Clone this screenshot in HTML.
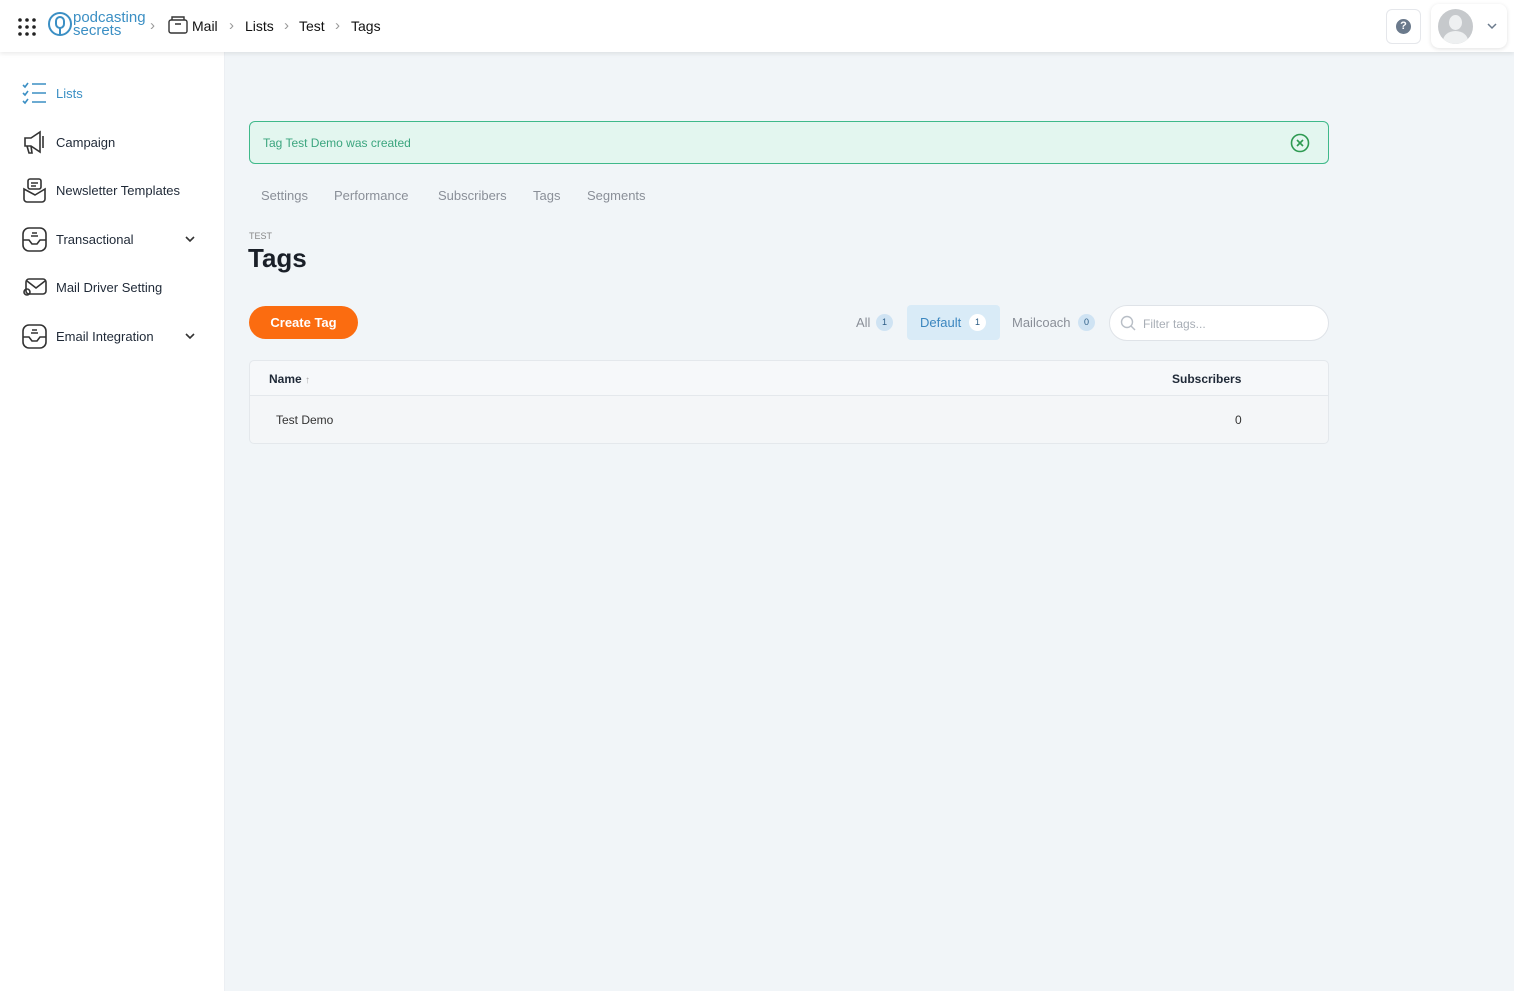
<!DOCTYPE html>
<html><head><meta charset="utf-8">
<style>
*{box-sizing:border-box;margin:0;padding:0}
body{width:1514px;height:991px;overflow:hidden;font-family:"Liberation Sans",sans-serif;background:#f1f5f8;color:#1f2937;position:relative}
.hdr{position:absolute;left:0;top:0;width:1514px;height:52px;background:#fff;box-shadow:0 2px 4px rgba(0,0,0,.08);z-index:2}
.side{position:absolute;left:0;top:52px;width:225px;height:939px;background:#fff;border-right:1px solid #eceff3}
.abs{position:absolute}
.nav{position:absolute;left:22px;display:flex;align-items:center;font-size:13px;color:#1f2937}
.nav svg{margin-right:9px}
.chev{position:absolute;left:184px}
.crumb{position:absolute;top:18px;font-size:14px;color:#111;font-weight:500}
.sep{position:absolute;top:17px;font-size:15px;color:#999}
.tab{position:absolute;top:188px;font-size:13px;color:#8a8f98}
</style></head><body>
<div class="hdr">
 <svg class="abs" style="left:17px;top:17px" width="20" height="20" viewBox="0 0 20 20" fill="#222"><circle cx="3" cy="3" r="1.8"/><circle cx="10" cy="3" r="1.8"/><circle cx="17" cy="3" r="1.8"/><circle cx="3" cy="10" r="1.8"/><circle cx="10" cy="10" r="1.8"/><circle cx="17" cy="10" r="1.8"/><circle cx="3" cy="17" r="1.8"/><circle cx="10" cy="17" r="1.8"/><circle cx="17" cy="17" r="1.8"/></svg>
 <svg class="abs" style="left:47px;top:11px" width="26" height="26" viewBox="0 0 26 26" fill="none" stroke="#3b8fc4" stroke-width="2"><circle cx="13" cy="13" r="11"/><rect x="9" y="6" width="8" height="11" rx="4"/><line x1="13" y1="17" x2="13" y2="23"/></svg>
 <div class="abs" style="left:73px;top:11px;font-size:15px;line-height:13px;color:#3b8fc4">podcasting<br>secrets</div>
 <span class="sep" style="left:150px">›</span>
 <svg class="abs" style="left:168px;top:16px" width="20" height="18" viewBox="0 0 20 18" fill="none" stroke="#333" stroke-width="1.4"><rect x="1" y="4" width="18" height="13" rx="2"/><path d="M4 4V1h12v3M7 8h6"/></svg>
 <span class="crumb" style="left:192px">Mail</span>
 <span class="sep" style="left:229px">›</span>
 <span class="crumb" style="left:245px">Lists</span>
 <span class="sep" style="left:284px">›</span>
 <span class="crumb" style="left:299px">Test</span>
 <span class="sep" style="left:335px">›</span>
 <span class="crumb" style="left:351px">Tags</span>
 <div class="abs" style="left:1386px;top:9px;width:35px;height:35px;border:1px solid #e5e7eb;border-radius:6px;background:#fff"><div style="margin:9px auto;width:15px;height:15px;border-radius:50%;background:#6b7a8c;color:#fff;font-size:11px;font-weight:bold;text-align:center;line-height:15px">?</div></div>
 <div class="abs" style="left:1431px;top:4px;width:76px;height:44px;border-radius:8px;background:#fff;box-shadow:0 1px 4px rgba(0,0,0,.12)">
  <div style="position:absolute;left:7px;top:5px;width:35px;height:35px;border-radius:50%;background:#c6c9cc;overflow:hidden"><div style="position:absolute;left:11px;top:6px;width:13px;height:15px;border-radius:50%;background:#eef0f1"></div><div style="position:absolute;left:5px;top:22px;width:25px;height:20px;border-radius:50%;background:#eef0f1"></div></div>
  <svg style="position:absolute;left:56px;top:19px" width="10" height="7" viewBox="0 0 10 7" fill="none" stroke="#6b7a8c" stroke-width="1.5"><path d="M1 1l4 4 4-4"/></svg>
 </div>
</div>
<div class="side">
 <div class="nav" style="top:29px;color:#3b8fc4"><svg width="25" height="24" viewBox="0 0 25 24" fill="none" stroke="#3b8fc4" stroke-width="1.6"><path d="M1 4l2 2 3-4M1 12l2 2 3-4M1 20l2 2 3-4M10 3h14M10 12h14M10 21h14"/></svg>Lists</div>
 <div class="nav" style="top:78px"><svg width="25" height="24" viewBox="0 0 25 24" fill="none" stroke="#333" stroke-width="1.6"><path d="M3 8h6l9-6v20l-9-6H3zM5 16l2 7h3l-1-7M21 6v12"/></svg>Campaign</div>
 <div class="nav" style="top:126px"><svg width="25" height="25" viewBox="0 0 25 25" fill="none" stroke="#333" stroke-width="1.6"><rect x="6" y="1" width="13" height="10" rx="2"/><path d="M9 5h7M9 8h5M2 11v10a3 3 0 003 3h15a3 3 0 003-3V11l-10 6z"/></svg>Newsletter Templates</div>
 <div class="nav" style="top:175px"><svg width="25" height="25" viewBox="0 0 25 25" fill="none" stroke="#333" stroke-width="1.6"><rect x="1" y="1" width="23" height="23" rx="6"/><path d="M1 13h6l3 4h5l3-4h6M10 6h5M9 9h7"/></svg>Transactional</div>
 <div class="nav" style="top:224px"><svg width="25" height="22" viewBox="0 0 25 22" fill="none" stroke="#333" stroke-width="1.6"><rect x="4" y="3" width="20" height="15" rx="3"/><path d="M5 5l9 7 9-7"/><circle cx="5" cy="16" r="3"/></svg>Mail Driver Setting</div>
 <div class="nav" style="top:272px"><svg width="25" height="25" viewBox="0 0 25 25" fill="none" stroke="#333" stroke-width="1.6"><rect x="1" y="1" width="23" height="23" rx="6"/><path d="M1 13h6l3 4h5l3-4h6M10 6h5M9 9h7"/></svg>Email Integration</div>
 <svg class="chev" style="top:183px" width="12" height="8" viewBox="0 0 12 8" fill="none" stroke="#333" stroke-width="1.6"><path d="M2 2l4 4 4-4"/></svg>
 <svg class="chev" style="top:280px" width="12" height="8" viewBox="0 0 12 8" fill="none" stroke="#333" stroke-width="1.6"><path d="M2 2l4 4 4-4"/></svg>
</div>
<div class="abs" style="left:249px;top:121px;width:1080px;height:43px;background:#e3f6ef;border:1px solid #3fb98a;border-radius:6px">
 <span style="position:absolute;left:13px;top:14px;font-size:12px;color:#3ba57e">Tag Test Demo was created</span>
 <svg style="position:absolute;left:1040px;top:11px" width="20" height="20" viewBox="0 0 20 20" fill="none" stroke="#2e9a52" stroke-width="1.6"><circle cx="10" cy="10" r="8.5"/><path d="M7 7l6 6M13 7l-6 6"/></svg>
</div>
<span class="tab" style="left:261px">Settings</span>
<span class="tab" style="left:334px">Performance</span>
<span class="tab" style="left:438px">Subscribers</span>
<span class="tab" style="left:533px">Tags</span>
<span class="tab" style="left:587px">Segments</span>
<div class="abs" style="left:249px;top:231px;font-size:9px;color:#888">TEST</div>
<div class="abs" style="left:248px;top:243px;font-size:26px;font-weight:bold;color:#1a1f28">Tags</div>
<div class="abs" style="left:249px;top:306px;width:109px;height:33px;border-radius:17px;background:#fb6c10;color:#fff;font-size:13px;font-weight:bold;text-align:center;line-height:33px">Create Tag</div>
<div class="abs" style="left:856px;top:315px;font-size:13px;color:#8a8f98">All</div>
<div class="abs" style="left:876px;top:314px;width:17px;height:17px;border-radius:50%;background:#cfe3f3;font-size:9px;color:#2b5c85;text-align:center;line-height:17px">1</div>
<div class="abs" style="left:907px;top:305px;width:93px;height:35px;border-radius:4px;background:#d9ebf7"></div>
<div class="abs" style="left:920px;top:315px;font-size:13px;color:#3b86bf">Default</div>
<div class="abs" style="left:969px;top:314px;width:17px;height:17px;border-radius:50%;background:#fff;font-size:9px;color:#2b5c85;text-align:center;line-height:17px">1</div>
<div class="abs" style="left:1012px;top:315px;font-size:13px;color:#8a8f98">Mailcoach</div>
<div class="abs" style="left:1078px;top:314px;width:17px;height:17px;border-radius:50%;background:#cfe3f3;font-size:9px;color:#2b5c85;text-align:center;line-height:17px">0</div>
<div class="abs" style="left:1109px;top:305px;width:220px;height:36px;border-radius:18px;background:#fff;border:1px solid #dfe3e8">
 <svg style="position:absolute;left:10px;top:9px" width="16" height="16" viewBox="0 0 16 16" fill="none" stroke="#b8bec6" stroke-width="1.4"><circle cx="7" cy="7" r="5.5"/><path d="M11 11l4 4"/></svg>
 <span style="position:absolute;left:33px;top:11px;font-size:12px;color:#a8aeb6">Filter tags...</span>
</div>
<div class="abs" style="left:249px;top:360px;width:1080px;height:84px;border:1px solid #e4e8ec;border-radius:5px;background:#f4f6f8">
 <div style="position:absolute;left:0;top:0;width:1078px;height:35px;border-bottom:1px solid #e4e8ec;background:#f6f8fa;border-radius:5px 5px 0 0"></div>
 <span style="position:absolute;left:19px;top:11px;font-size:12px;font-weight:bold;color:#1f2937">Name <span style="color:#aaa;font-weight:normal;font-size:10px">↑</span></span>
 <span style="position:absolute;left:922px;top:11px;font-size:12px;font-weight:bold;color:#1f2937">Subscribers</span>
 <span style="position:absolute;left:26px;top:52px;font-size:12px;color:#333">Test Demo</span>
 <span style="position:absolute;left:985px;top:52px;font-size:12px;color:#333">0</span>
</div>
</body></html>
